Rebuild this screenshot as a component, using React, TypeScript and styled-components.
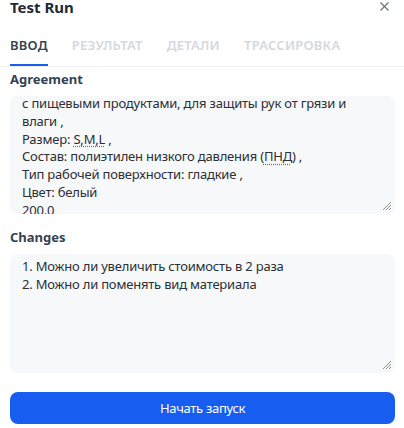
import React from "react";
import styled, { createGlobalStyle } from "styled-components";

const Global = createGlobalStyle`
  html, body { margin: 0; padding: 0; background: #ffffff; }
  body { font-family: "Noto Sans", "Open Sans", sans-serif; color: #1f2937; }
  * { box-sizing: border-box; }
`;

const Panel = styled.div`
  width: 404px;
  height: 428px;
  overflow: hidden;
  padding: 0 9px 0 10px;
  display: flex;
  flex-direction: column;
`;

const Header = styled.div`
  display: flex;
  align-items: center;
  justify-content: space-between;
  height: 18px;
`;

const Title = styled.h2`
  margin: 0;
  font-size: 15px;
  font-weight: 700;
  color: #1f2937;
  line-height: 18px;
  position: relative;
  top: -2px;
`;

const Close = styled.button`
  border: 0;
  background: none;
  padding: 0;
  width: 12px;
  height: 12px;
  margin-right: 5px;
  margin-top: -6px;
  display: flex;
  align-items: center;
  justify-content: center;
`;

const Tabs = styled.div`
  display: flex;
  gap: 24px;
  margin: 15px -9px 0 -10px;
  padding: 0 9px 0 10px;
  border-bottom: 1px solid #eceef1;
`;

const Tab = styled.div<{ $active?: boolean }>`
  font-size: 13px;
  font-weight: 600;
  letter-spacing: 0.25px;
  line-height: 18px;
  padding: 3px 0 10px;
  color: ${(p) => (p.$active ? "#374151" : "#d5d9de")};
  border-bottom: 2px solid ${(p) => (p.$active ? "#1a5fe8" : "transparent")};
`;

const Section = styled.div<{ $mt: number }>`
  display: flex;
  flex-direction: column;
  gap: 8px;
  margin-top: ${(p) => p.$mt}px;
`;

const Label = styled.div`
  font-size: 13px;
  font-weight: 700;
  color: #374151;
  line-height: 18px;
`;

const Field = styled.div<{ $h: number }>`
  position: relative;
  height: ${(p) => p.$h}px;
  background: #f7f8fa;
  border-radius: 8px;
  padding: 0 12px;
  overflow: hidden;
`;

const FieldText = styled.div<{ $offset: number }>`
  margin-top: ${(p) => p.$offset}px;
  font-size: 13px;
  letter-spacing: -0.2px;
  line-height: 17.8px;
  color: #2b2f36;
  white-space: pre-wrap;
`;

const Spell = styled.span`
  text-decoration: underline dotted #e0433a;
  text-underline-offset: 2px;
`;

const Grip = styled.svg`
  position: absolute;
  right: 3px;
  bottom: 3px;
`;

const RunButton = styled.button`
  height: 32px;
  border: 0;
  border-radius: 8px;
  background: #165df0;
  color: #ffffff;
  font-family: "Noto Sans", sans-serif;
  font-size: 13px;
  letter-spacing: -0.3px;
  font-weight: 400;
  margin-top: 19px;
`;

const ResizeGrip = () => (
  <Grip width="10" height="10" viewBox="0 0 10 10">
    <path d="M9 1 L1 9 M9 4 L4 9 M9 7 L7 9" stroke="#8a8f96" strokeWidth="1" />
  </Grip>
);

export default function App() {
  return (
    <>
      <Global />
      <Panel>
        <Header>
          <Title>Test Run</Title>
          <Close aria-label="close">
            <svg width="9" height="9" viewBox="0 0 9 9">
              <path d="M0.5 0.5 L8.5 8.5 M8.5 0.5 L0.5 8.5" stroke="#6b7280" strokeWidth="1.2" />
            </svg>
          </Close>
        </Header>
        <Tabs>
          <Tab $active>ВВОД</Tab>
          <Tab>РЕЗУЛЬТАТ</Tab>
          <Tab>ДЕТАЛИ</Tab>
          <Tab>ТРАССИРОВКА</Tab>
        </Tabs>
        <Section $mt={3}>
          <Label>Agreement</Label>
          <Field $h={118}>
            <FieldText $offset={-1}>
              {"с пищевыми продуктами, для защиты рук от грязи и\nвлаги ,\nРазмер: "}
              <Spell>S,M,L</Spell>
              {" ,\nСостав: полиэтилен низкого давления ("}
              <Spell>ПНД</Spell>
              {") ,\nТип рабочей поверхности: гладкие ,\nЦвет: белый\n200.0"}
            </FieldText>
            <ResizeGrip />
          </Field>
        </Section>
        <Section $mt={14}>
          <Label>Changes</Label>
          <Field $h={119}>
            <FieldText $offset={4}>
              {"1. Можно ли увеличить стоимость в 2 раза\n2. Можно ли поменять вид материала"}
            </FieldText>
            <ResizeGrip />
          </Field>
        </Section>
        <RunButton>Начать запуск</RunButton>
      </Panel>
    </>
  );
}
